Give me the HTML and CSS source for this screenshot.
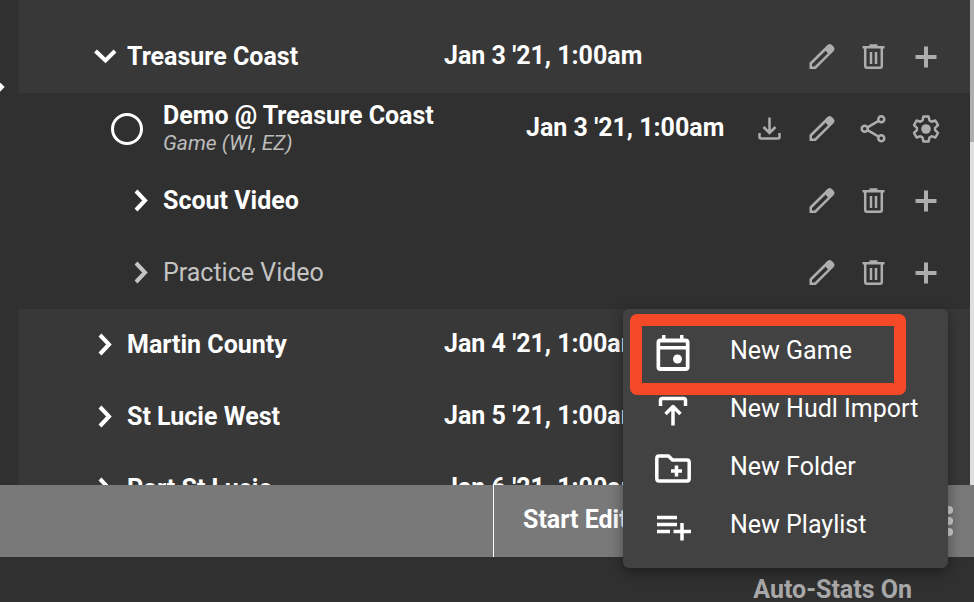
FILE: index.html
```html
<!DOCTYPE html>
<html lang="en">
<head>
<meta charset="utf-8">
<title>Video Library</title>
<link rel="stylesheet" href="styles.css">
</head>
<body>
<svg class="defs" aria-hidden="true">
  <symbol id="down" viewBox="0 0 32 32"><path d="M6.500 10 L16.500 19.500 L26 10" class="line thick"/></symbol>
  <symbol id="right" viewBox="0 0 32 32"><path d="M11 6 L20 15.500 L11 25" class="line thick"/></symbol>
  <symbol id="pencil" viewBox="0 0 32 32"><path fill-rule="evenodd" d="M3.500 28V21.700L21.700 3.700Q23.800 2.300 25.800 3.900L27.900 6Q29.300 8 27.800 10L9.700 28ZM6 25.500H8.500L22 12.200 19.500 9.700 6 23Z"/></symbol>
  <symbol id="trash" viewBox="0 0 32 32"><path class="line" d="M4.500 6.300H26.500M11.500 4.500H19.500M7.200 7V25Q7.200 26.800 9 26.800H22Q23.800 26.800 23.800 25V7"/><path class="line" d="M13 11V23M18 11V23"/></symbol>
  <symbol id="plus" viewBox="0 0 32 32"><path d="M14 5.500h4v8.500h8.500v4h-8.500v8.500h-4v-8.500H5.500v-4h8.500z"/></symbol>
  <symbol id="download" viewBox="0 0 32 32"><path class="line" d="M15.500 4.500V19M9.500 14l6 6 6-6M5.500 20V24Q5.500 25.500 7 25.500H24Q25.500 25.500 25.500 24V20"/></symbol>
  <symbol id="share" viewBox="0 0 32 32"><path class="line" d="M9.500 14.300L21 7.700M9.500 17.200L21 23.800"/><g class="line"><circle cx="6.700" cy="15.800" r="3"/><circle cx="23.300" cy="6.200" r="3"/><circle cx="23.300" cy="25.200" r="3"/></g></symbol>
  <symbol id="gear" viewBox="-16 -16 32 32"><path class="line round" d="M-3.500-8.500L-2.600-12.400H2.600L3.500-8.500L5.600-7.300L9.400-8.500L12-3.900L9.100-1.200V1.200L12 3.900L9.400 8.500L5.600 7.300L3.500 8.500L2.600 12.400H-2.600L-3.500 8.500L-5.600 7.300L-9.400 8.500L-12 3.900L-9.100 1.200V-1.200L-12-3.900L-9.400-8.500L-5.600-7.300Z"/><circle r="4.800"/></symbol>
  <symbol id="calendar" viewBox="0 0 40 40"><path fill-rule="evenodd" d="M9 2h3.500v3.500h14.500V2h3.500v3.500h2q4 0 4 4v24.500q0 4-4 4H7.500q-4 0-4-4V9.500q0-4 4-4H9zM7.200 9.500v3.500h25.600V9.500zM7.200 16.500v17.500h25.600V16.500z"/><circle cx="24.500" cy="26" r="4.500"/></symbol>
  <symbol id="import" viewBox="0 0 40 40"><path class="line heavy" d="M7.500 15V9.500Q7.500 7.500 9.500 7.500H30.500Q32.500 7.500 32.500 9.500V15M20 34.500V16M12.500 23L20 15.500 27.500 23"/></symbol>
  <symbol id="folder" viewBox="0 0 40 40"><path class="line heavy" d="M6 7H15.500L19.500 11H34Q36.200 11 36.200 13.500V29.500Q36.200 32 34 32H6Q3.800 32 3.800 29.500V9.500Q3.800 7 6 7Z"/><path class="line heavy" d="M18 22H29M23.500 16.500V27.500"/></symbol>
  <symbol id="playlist" viewBox="0 0 40 40"><path class="line heavy" d="M4 10.500H24M4 17.500H24M4 24.500H17M20.500 24.500H38M29 16V33.500"/></symbol>
  <symbol id="dots" viewBox="0 0 32 32"><circle cx="16" cy="5" r="4"/><circle cx="16" cy="16" r="4"/><circle cx="16" cy="27" r="4"/></symbol>
</svg>

<main class="library">
  <aside class="rail"><span class="rail-handle"></span></aside>
  <section class="list">
    <div class="row">
      <button class="toggle" aria-label="Collapse"><svg class="icon"><use href="#down"/></svg></button>
      <span class="name">Treasure Coast</span>
      <time class="date">Jan 3 '21, 1:00am</time>
      <div class="actions">
        <button aria-label="Edit"><svg class="icon"><use href="#pencil"/></svg></button>
        <button aria-label="Delete"><svg class="icon"><use href="#trash"/></svg></button>
        <button aria-label="Add"><svg class="icon"><use href="#plus"/></svg></button>
      </div>
    </div>
    <div class="group">
      <div class="row child">
        <input class="pick" type="radio" name="game" aria-label="Demo @ Treasure Coast">
        <div class="name game">Demo @ Treasure Coast<em class="detail">Game (WI, EZ)</em></div>
        <time class="date short">Jan 3 '21, 1:00am</time>
        <div class="actions">
          <button aria-label="Download"><svg class="icon"><use href="#download"/></svg></button>
          <button aria-label="Edit"><svg class="icon"><use href="#pencil"/></svg></button>
          <button aria-label="Share"><svg class="icon"><use href="#share"/></svg></button>
          <button aria-label="Settings"><svg class="icon"><use href="#gear"/></svg></button>
        </div>
      </div>
      <div class="row child">
        <button class="toggle" aria-label="Expand"><svg class="icon"><use href="#right"/></svg></button>
        <span class="name">Scout Video</span>
        <div class="actions">
          <button aria-label="Edit"><svg class="icon"><use href="#pencil"/></svg></button>
          <button aria-label="Delete"><svg class="icon"><use href="#trash"/></svg></button>
          <button aria-label="Add"><svg class="icon"><use href="#plus"/></svg></button>
        </div>
      </div>
      <div class="row child muted">
        <button class="toggle" aria-label="Expand"><svg class="icon"><use href="#right"/></svg></button>
        <span class="name">Practice Video</span>
        <div class="actions">
          <button aria-label="Edit"><svg class="icon"><use href="#pencil"/></svg></button>
          <button aria-label="Delete"><svg class="icon"><use href="#trash"/></svg></button>
          <button aria-label="Add"><svg class="icon"><use href="#plus"/></svg></button>
        </div>
      </div>
    </div>
    <div class="row">
      <button class="toggle" aria-label="Expand"><svg class="icon"><use href="#right"/></svg></button>
      <span class="name">Martin County</span>
      <time class="date">Jan 4 '21, 1:00am</time>
      <div class="actions spacer"></div>
    </div>
    <div class="row">
      <button class="toggle" aria-label="Expand"><svg class="icon"><use href="#right"/></svg></button>
      <span class="name">St Lucie West</span>
      <time class="date">Jan 5 '21, 1:00am</time>
      <div class="actions spacer"></div>
    </div>
    <div class="row">
      <button class="toggle" aria-label="Expand"><svg class="icon"><use href="#right"/></svg></button>
      <span class="name">Port St Lucie</span>
      <time class="date">Jan 6 '21, 1:00am</time>
      <div class="actions spacer"></div>
    </div>
  </section>
  <div class="scrollbar"><div class="thumb"></div></div>
</main>

<div class="toolbar">
  <button class="start">Start Editing</button>
  <button class="more" aria-label="More"><svg class="icon"><use href="#dots"/></svg></button>
</div>
<footer class="status">Auto-Stats On</footer>

<div class="menu" role="menu">
  <button class="item" role="menuitem"><svg class="menu-icon"><use href="#calendar"/></svg><span>New Game</span></button>
  <button class="item" role="menuitem"><svg class="menu-icon"><use href="#import"/></svg><span>New Hudl Import</span></button>
  <button class="item" role="menuitem"><svg class="menu-icon"><use href="#folder"/></svg><span>New Folder</span></button>
  <button class="item" role="menuitem"><svg class="menu-icon"><use href="#playlist"/></svg><span>New Playlist</span></button>
  <div class="highlight"></div>
</div>
</body>
</html>
```
FILE: styles.css
```css
* { box-sizing: border-box; }

body {
  margin: 0;
  height: 100vh;
  display: flex;
  flex-direction: column;
  position: relative;
  overflow: hidden;
  background: #303030;
  color: #fff;
  font-family: Roboto, "Liberation Sans", sans-serif;
  font-size: 25px;
  line-height: 32px;
}

button {
  margin: 0;
  padding: 0;
  border: 0;
  background: none;
  color: inherit;
  font: inherit;
}

svg { fill: currentColor; }
.defs { position: absolute; width: 0; height: 0; }
.icon { display: block; width: 32px; height: 32px; }
.line { fill: none; stroke: currentColor; stroke-width: 2.5px; }
.thick { stroke-width: 4px; }
.heavy { stroke-width: 3.5px; stroke-linejoin: round; }
.round { stroke-linejoin: round; }

.library {
  flex: 1;
  min-height: 0;
  display: flex;
  overflow: hidden;
}

.rail {
  flex: 0 0 19px;
  padding-top: 83px;
  overflow: hidden;
}

.rail-handle {
  display: block;
  width: 8px;
  height: 8px;
  margin-left: -5px;
  background: #fff;
  transform: rotate(45deg);
}

.list {
  flex: 1;
  min-width: 0;
  padding-top: 21px;
  background: #383838;
}

.group { background: #303030; }

.row {
  height: 72px;
  padding: 0 18px 0 70px;
  display: flex;
  align-items: center;
  font-weight: 700;
}

.child { padding-left: 106px; }
.toggle { flex: none; margin-right: 6px; }

.pick {
  appearance: none;
  flex: none;
  width: 32px;
  height: 32px;
  margin: 0 20px 0 -14px;
  border: 3px solid #fff;
  border-radius: 50%;
}

.name { flex: 1; white-space: nowrap; }
.game { line-height: 28px; }

.detail {
  display: block;
  color: #bdbdbd;
  font-size: 21px;
  font-weight: 400;
  line-height: 26px;
}

.muted { color: #c4c4c4; font-weight: 400; }
.date { flex: none; width: 352px; padding-bottom: 2px; white-space: nowrap; }
.short { width: 218px; }
.actions { flex: none; display: flex; color: #adadad; }
.actions button { width: 52px; padding: 0 10px; }
.spacer { width: 156px; }

.scrollbar { flex: 0 0 4px; background: #e0dfe0; }
.thumb { height: 142px; background: #b0aeb0; }

.toolbar {
  flex: 0 0 72px;
  display: flex;
  align-items: center;
  justify-content: flex-end;
  background: #797979;
}

.start {
  align-self: stretch;
  flex: 0 0 440px;
  padding: 0 0 2px 29px;
  border-left: 1px solid #fff;
  text-align: left;
  font-weight: 700;
}

.more { margin-right: 9px; color: #d0d0d0; }

.status {
  flex: none;
  padding: 21px 62px 0 0;
  color: #a8a8a8;
  font-weight: 700;
  line-height: 24px;
  text-align: right;
}

.menu {
  position: absolute;
  right: 26px;
  bottom: 34px;
  width: 325px;
  padding: 13px 0 14px;
  border-radius: 6px;
  background: #424242;
  box-shadow: 0 4px 14px rgba(0, 0, 0, .4);
}

.item {
  width: 100%;
  height: 58px;
  padding-left: 30px;
  display: flex;
  align-items: center;
  gap: 37px;
}

.menu-icon { flex: none; width: 40px; height: 40px; margin-top: 4px; }

.highlight {
  position: absolute;
  top: 5px;
  left: 7px;
  width: 276px;
  height: 81px;
  border: 12px solid #f54927;
  border-radius: 7px;
  pointer-events: none;
}
```
